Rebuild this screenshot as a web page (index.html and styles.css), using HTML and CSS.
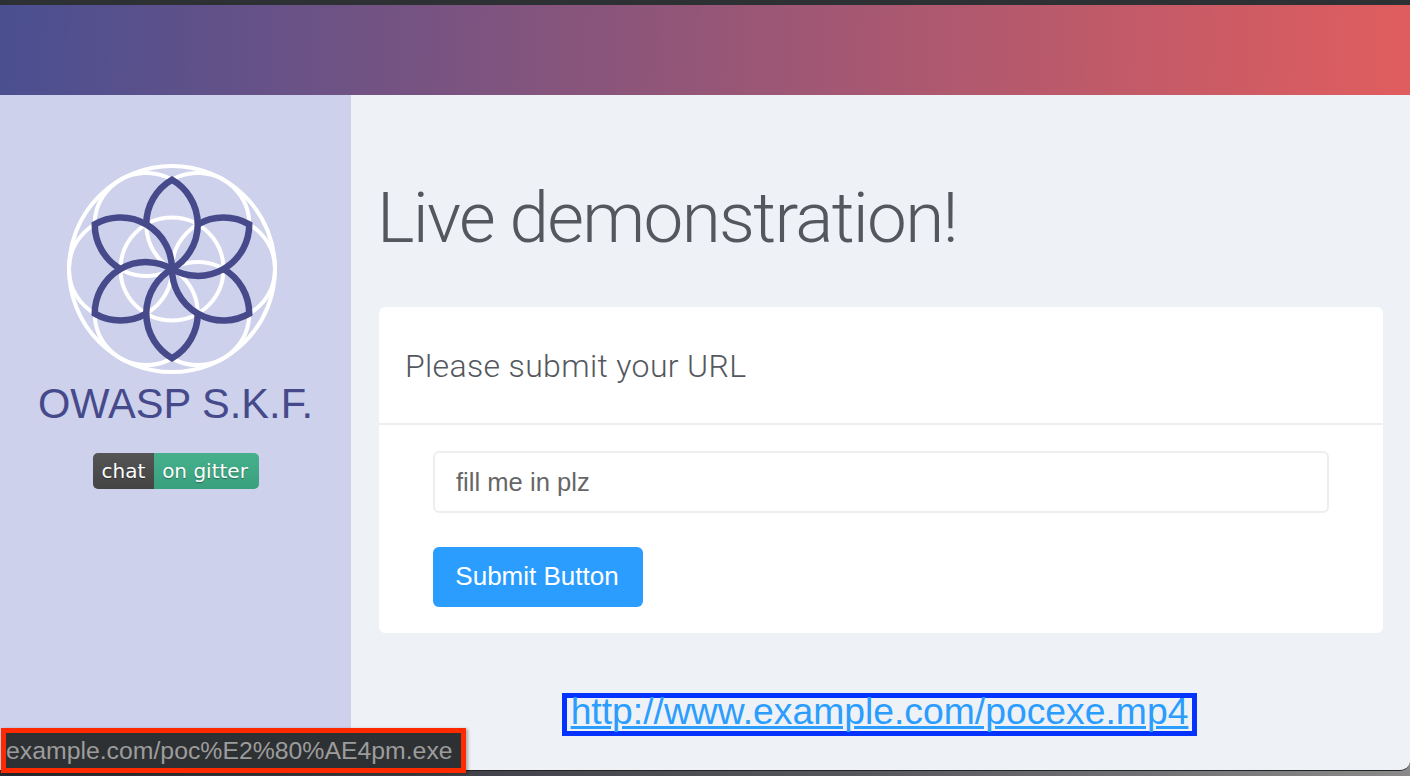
FILE: index.html

```html
<!DOCTYPE html>
<html lang="en">
<head>
    <meta charset="UTF-8">
    <meta name="viewport" content="width=device-width, initial-scale=1.0">
    <title>OWASP S.K.F.</title>
    <link rel="stylesheet" href="styles.css">
</head>
<body>

    <div class="window">
        <div class="topbar"></div>
        <header class="banner"></header>

        <div class="layout">
            <aside class="sidebar">
                <svg class="logo" width="212" height="212" viewBox="-106 -106 212 212">
                    <defs>
                        <path id="petal" d="M-25.75 -44.6A51.5 51.5 0 0 1 0 -89.2A51.5 51.5 0 0 1 0 0"/>
                    </defs>
                    <g class="logo-rings">
                        <circle r="103"/>
                        <circle r="51.5"/>
                        <circle cx="51.5" r="51.5"/>
                        <circle cx="-51.5" r="51.5"/>
                        <circle cx="25.75" cy="-44.6" r="51.5"/>
                        <circle cx="-25.75" cy="-44.6" r="51.5"/>
                        <circle cx="25.75" cy="44.6" r="51.5"/>
                        <circle cx="-25.75" cy="44.6" r="51.5"/>
                    </g>
                    <g class="logo-petals">
                        <use href="#petal"/>
                        <use href="#petal" transform="rotate(60)"/>
                        <use href="#petal" transform="rotate(120)"/>
                        <use href="#petal" transform="rotate(180)"/>
                        <use href="#petal" transform="rotate(240)"/>
                        <use href="#petal" transform="rotate(300)"/>
                    </g>
                </svg>
                <h2 class="brand">OWASP S.K.F.</h2>
                <div class="badge"><span class="badge-left">chat</span><span class="badge-right">on gitter</span></div>
            </aside>

            <main class="content">
                <h1>Live demonstration!</h1>

                <section class="card">
                    <div class="card-header">Please submit your URL</div>
                    <form class="card-body">
                        <input class="url-input" type="text" placeholder="fill me in plz">
                        <button class="submit-btn" type="button">Submit Button</button>
                    </form>
                </section>

                <div class="link-row">
                    <a class="poc-link" href="#">http://www.example.com/pocexe.mp4</a>
                </div>
            </main>
        </div>
    </div>

    <div class="status-url">example.com/poc%E2%80%AE4pm.exe</div>

</body>
</html>
```

FILE: styles.css

```css
body {
    margin: 0;
    height: 776px;
    overflow: hidden;
    position: relative;
    font-family: 'Liberation Sans', Arial, sans-serif;
    background: linear-gradient(to right, #2a2a33, #55555c 60%, #8a8a8a);
}

.window {
    height: 771px;
    display: flex;
    flex-direction: column;
    overflow: hidden;
    border-bottom-right-radius: 10px;
    border-bottom: 1px solid #222;
    box-sizing: border-box;
}

.topbar {
    height: 5px;
    background-color: #2e3133;
}

.banner {
    height: 90px;
    background: linear-gradient(92deg, #4a4f91 0%, #e05d5e 100%);
}

.layout {
    flex: 1;
    display: flex;
    min-height: 0;
}

.sidebar {
    width: 351px;
    background-color: #cdd1eb;
    display: flex;
    flex-direction: column;
    align-items: center;
    padding: 68px 7px 0 0;
    box-sizing: border-box;
}

.logo {
    display: block;
    flex: none;
}

.logo-rings {
    fill: none;
    stroke: #fff;
    stroke-width: 4;
}

.logo-petals {
    fill: none;
    stroke: #464a8b;
    stroke-width: 6.5;
    stroke-miterlimit: 10;
}

.brand {
    margin: 6px 0 0;
    padding-left: 7px;
    font-size: 41.6px;
    line-height: 46px;
    font-weight: normal;
    color: #464a8b;
    white-space: nowrap;
}

.badge {
    display: flex;
    height: 36px;
    margin: 26px 0 0 8px;
    border-radius: 5px;
    overflow: hidden;
    font-family: 'DejaVu Sans', sans-serif;
    font-size: 20px;
    line-height: 36px;
    color: #fff;
    text-shadow: 0 1px 1px rgba(0, 0, 0, 0.35);
}

.badge-left {
    width: 61px;
    text-align: center;
    background: linear-gradient(#555, #444);
}

.badge-right {
    width: 105px;
    padding-right: 3px;
    box-sizing: border-box;
    text-align: center;
    background: linear-gradient(#46b08c, #39a07e);
}

.content {
    flex: 1;
    background-color: #eef1f6;
    padding: 0 27px 0 28px;
}

h1 {
    margin: 80px 0 0 -2px;
    font-family: 'Roboto', sans-serif;
    font-size: 71px;
    line-height: 85px;
    font-weight: 300;
    letter-spacing: -1.7px;
    color: #54585e;
}

.card {
    margin-top: 47px;
    height: 326px;
    box-sizing: border-box;
    background-color: #fff;
    border-radius: 6px;
}

.card-header {
    height: 118px;
    box-sizing: border-box;
    padding-left: 26px;
    border-bottom: 2px solid #eee;
    font-family: 'Roboto', sans-serif;
    font-weight: 300;
    font-size: 32px;
    line-height: 118px;
    letter-spacing: 0.35px;
    color: #54585e;
}

.card-body {
    display: flex;
    flex-direction: column;
    align-items: flex-start;
    gap: 34px;
    padding: 26px 54px;
}

.url-input {
    width: 100%;
    height: 62px;
    box-sizing: border-box;
    padding: 0 21px;
    border: 2px solid #eee;
    border-radius: 6px;
    font-family: 'Liberation Sans', Arial, sans-serif;
    font-size: 25.6px;
    outline: none;
}

.url-input::placeholder {
    color: #666;
    opacity: 1;
}

.submit-btn {
    width: 210px;
    height: 60px;
    padding: 0 2px 2px 0;
    border: none;
    border-radius: 6px;
    background-color: #2a9dff;
    color: #fff;
    font-family: 'Liberation Sans', Arial, sans-serif;
    font-size: 26px;
}

.link-row {
    margin-top: 60px;
    text-align: center;
}

.poc-link {
    display: inline-block;
    margin-right: 3px;
    border: 5px solid #0433ff;
    padding: 0 3.5px 6px;
    font-size: 37.3px;
    line-height: 27px;
    color: #2a9dff;
}

/* browser status bubble, sits over the page */
.status-url {
    position: absolute;
    left: 1px;
    top: 728px;
    width: 465px;
    height: 45px;
    box-sizing: border-box;
    border: 5px solid #ff2a00;
    background-color: #2e3133;
    color: #9c9c9c;
    font-size: 24.8px;
    line-height: 35px;
    white-space: nowrap;
    box-shadow: 2px 1px 3px rgba(0, 0, 0, 0.3);
}
```
